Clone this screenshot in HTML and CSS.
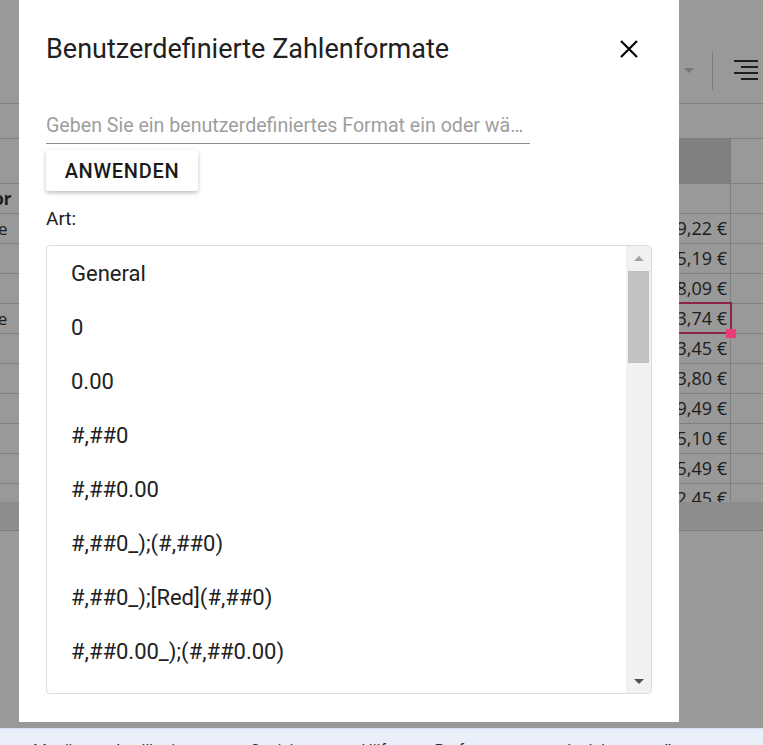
FILE: index.html
```html
<!DOCTYPE html>
<html lang="de">

<head>
    <meta charset="utf-8">
    <title>Benutzerdefinierte Zahlenformate</title>
    <link rel="stylesheet" href="styles.css">
</head>

<body>
    <div class="app">
        <!-- Tabelle im Hintergrund -->
        <div class="sheet">
            <div class="toolbar">
                <span class="drop-arrow"></span>
                <span class="tb-sep"></span>
                <svg class="align-icon" width="24" height="21" viewBox="0 0 24 21">
                    <rect x="0" y="0" width="24" height="2" fill="#333" />
                    <rect x="7" y="6" width="17" height="2" fill="#333" />
                    <rect x="0" y="12" width="24" height="2" fill="#333" />
                    <rect x="7" y="18" width="17" height="2" fill="#333" />
                </svg>
            </div>
            <div class="formula-row"></div>
            <div class="head-row">
                <div class="c-name"></div>
                <div class="c-mid"></div>
                <div class="c-val active-col"></div>
                <div class="c-b"></div>
            </div>
            <div class="rows">
                <div class="row"><div class="c-name bold">Autor</div><div class="c-mid"></div><div class="c-val"></div><div class="c-b"></div></div>
                <div class="row"><div class="c-name">Tasse</div><div class="c-mid"></div><div class="c-val">9,22 €</div><div class="c-b"></div></div>
                <div class="row"><div class="c-name"></div><div class="c-mid"></div><div class="c-val">5,19 €</div><div class="c-b"></div></div>
                <div class="row"><div class="c-name"></div><div class="c-mid"></div><div class="c-val">8,09 €</div><div class="c-b"></div></div>
                <div class="row"><div class="c-name">Kerze</div><div class="c-mid"></div><div class="c-val selected">3,74 €</div><div class="c-b"></div></div>
                <div class="row"><div class="c-name"></div><div class="c-mid"></div><div class="c-val">3,45 €</div><div class="c-b"></div></div>
                <div class="row"><div class="c-name"></div><div class="c-mid"></div><div class="c-val">3,80 €</div><div class="c-b"></div></div>
                <div class="row"><div class="c-name"></div><div class="c-mid"></div><div class="c-val">9,49 €</div><div class="c-b"></div></div>
                <div class="row"><div class="c-name"></div><div class="c-mid"></div><div class="c-val">5,10 €</div><div class="c-b"></div></div>
                <div class="row"><div class="c-name"></div><div class="c-mid"></div><div class="c-val">5,49 €</div><div class="c-b"></div></div>
                <div class="row"><div class="c-name"></div><div class="c-mid"></div><div class="c-val">2,45 €</div><div class="c-b"></div></div>
            </div>
            <div class="hscroll"></div>
        </div>

        <div class="overlay"></div>

        <!-- Dialog -->
        <div class="dialog">
            <div class="dlg-head">
                <h2 class="dlg-title">Benutzerdefinierte Zahlenformate</h2>
                <button class="close-btn" aria-label="Schließen">
                    <svg width="18" height="18" viewBox="0 0 18 18">
                        <path d="M1 1L17 17M17 1L1 17" stroke="#000" stroke-width="2.2" fill="none" />
                    </svg>
                </button>
            </div>
            <input class="format-input" type="text"
                placeholder="Geben Sie ein benutzerdefiniertes Format ein oder wählen Sie eines aus der Liste">
            <button class="apply-btn">ANWENDEN</button>
            <p class="art-label">Art:</p>
            <div class="format-list">
                <ul class="items">
                    <li>General</li>
                    <li>0</li>
                    <li>0.00</li>
                    <li>#,##0</li>
                    <li>#,##0.00</li>
                    <li>#,##0_);(#,##0)</li>
                    <li>#,##0_);[Red](#,##0)</li>
                    <li>#,##0.00_);(#,##0.00)</li>
                    <li>#,##0.00_);[Red](#,##0.00)</li>
                </ul>
                <div class="vscroll">
                    <div class="sc-btn"><span class="arrow-up"></span></div>
                    <div class="sc-track"><div class="sc-thumb"></div></div>
                    <div class="sc-btn"><span class="arrow-down"></span></div>
                </div>
            </div>
        </div>
    </div>

    <div class="statusbar">
        <span>Menü</span>
        <span>Applikationen</span>
        <span>Speichern</span>
        <span>Hilfe</span>
        <span>Performance</span>
        <span>Insights</span>
        <span>Ⅱ</span>
    </div>
</body>

</html>
```

FILE: styles.css
```css
* {
    box-sizing: border-box;
    margin: 0;
    padding: 0;
}

body {
    width: 763px;
    height: 745px;
    overflow: hidden;
    background: #ffffff;
    font-family: Roboto, "Noto Sans", sans-serif;
}

.app {
    height: 728px;
    position: relative;
    overflow: hidden;
}

/* Tabelle */
.sheet {
    display: flex;
    flex-direction: column;
    height: 100%;
    font-family: "Open Sans", "Liberation Sans", sans-serif;
    color: #333333;
}

.toolbar {
    height: 104px;
    border-bottom: 1px solid #d4d4d4;
    display: flex;
    justify-content: flex-end;
    align-items: center;
    padding-top: 38px;
    padding-right: 5px;
}

.drop-arrow {
    width: 0;
    height: 0;
    border-left: 5.5px solid transparent;
    border-right: 5.5px solid transparent;
    border-top: 5px solid #c4c4c4;
    margin-right: 18px;
}

.tb-sep {
    width: 1px;
    height: 39px;
    background: #d0d0d0;
    margin-right: 21px;
}

.formula-row {
    height: 35px;
    border-bottom: 1px solid #d4d4d4;
}

.head-row {
    height: 45px;
    display: flex;
    border-bottom: 1px solid #d4d4d4;
}

.rows {
    height: 318px;
    overflow: hidden;
}

.row {
    height: 30px;
    display: flex;
    border-bottom: 1px solid #d4d4d4;
}

.c-name {
    width: 260px;
    margin-left: -37px;
    font-size: 17px;
    line-height: 29px;
    white-space: nowrap;
}

.c-name.bold {
    font-weight: 700;
}

.c-mid {
    flex: 1;
}

.c-val {
    width: 200px;
    border-right: 1px solid #d4d4d4;
    text-align: right;
    padding-right: 3px;
    font-size: 18px;
    line-height: 29px;
    position: relative;
}

.active-col {
    background: #d6d6d6;
}

.c-b {
    width: 32px;
}

.selected::after {
    content: "";
    position: absolute;
    left: -2px;
    right: -2px;
    top: -2px;
    bottom: -1px;
    border: 2px solid #e93c78;
}

.selected::before {
    content: "";
    position: absolute;
    right: -6px;
    bottom: -5px;
    width: 10px;
    height: 9px;
    background: #e93c78;
    z-index: 1;
}

.hscroll {
    height: 29px;
    background: #ebebeb;
    border-bottom: 1px solid #d0d0d0;
}

.overlay {
    position: absolute;
    inset: 0;
    background: rgba(0, 0, 0, 0.4);
}

/* Dialog */
.dialog {
    position: absolute;
    left: 19px;
    top: 0;
    width: 660px;
    height: 722px;
    background: #ffffff;
    padding: 0 27px;
    display: flex;
    flex-direction: column;
    align-items: flex-start;
    color: #212121;
}

.dlg-head {
    height: 97px;
    width: 100%;
    display: flex;
    align-items: center;
    justify-content: space-between;
}

.dlg-title {
    font-size: 27px;
    font-weight: 400;
}

.close-btn {
    border: none;
    background: none;
    padding: 7px;
    margin-right: 7px;
    display: flex;
    cursor: pointer;
}

.format-input {
    margin-top: 11px;
    width: 484px;
    height: 36px;
    border: none;
    border-bottom: 1px solid #8c8c8c;
    font-family: Roboto, sans-serif;
    font-size: 19.6px;
    color: #212121;
    outline: none;
    text-overflow: ellipsis;
}

.format-input::placeholder {
    color: #9e9e9e;
}

.apply-btn {
    margin-top: 6px;
    width: 152px;
    height: 41px;
    border: none;
    border-radius: 2px;
    background: #ffffff;
    box-shadow: 0 2px 4px rgba(0, 0, 0, 0.25);
    font-family: Roboto, sans-serif;
    font-size: 20px;
    font-weight: 500;
    color: #1a1a1a;
    letter-spacing: 0.7px;
}

.art-label {
    margin-top: 17px;
    margin-bottom: 15px;
    font-size: 19px;
    line-height: 22px;
}

.format-list {
    width: 100%;
    height: 449px;
    border: 1px solid #dcdcdc;
    border-radius: 4px;
    display: flex;
    overflow: hidden;
}

.items {
    flex: 1;
    list-style: none;
    overflow: hidden;
}

.items li {
    height: 54px;
    padding-left: 24px;
    display: flex;
    align-items: center;
    font-size: 22px;
    white-space: nowrap;
}

.vscroll {
    width: 25px;
    background: #f1f1f1;
    display: flex;
    flex-direction: column;
}

.sc-btn {
    height: 24px;
    display: flex;
    align-items: center;
    justify-content: center;
}

.arrow-up {
    border-left: 5px solid transparent;
    border-right: 5px solid transparent;
    border-bottom: 5px solid #a3a3a3;
}

.arrow-down {
    border-left: 5px solid transparent;
    border-right: 5px solid transparent;
    border-top: 5px solid #505050;
}

.sc-track {
    flex: 1;
    padding: 1px 2px 0;
}

.sc-thumb {
    height: 92px;
    background: #c1c1c1;
}

/* Leiste unten */
.statusbar {
    height: 17px;
    background: #ebeff9;
    border-top: 1px solid #d6e1f7;
    overflow: hidden;
    display: flex;
    gap: 40px;
    padding: 12px 0 0 33px;
    font-size: 16px;
    line-height: 20px;
    color: #333333;
    white-space: nowrap;
}
```
